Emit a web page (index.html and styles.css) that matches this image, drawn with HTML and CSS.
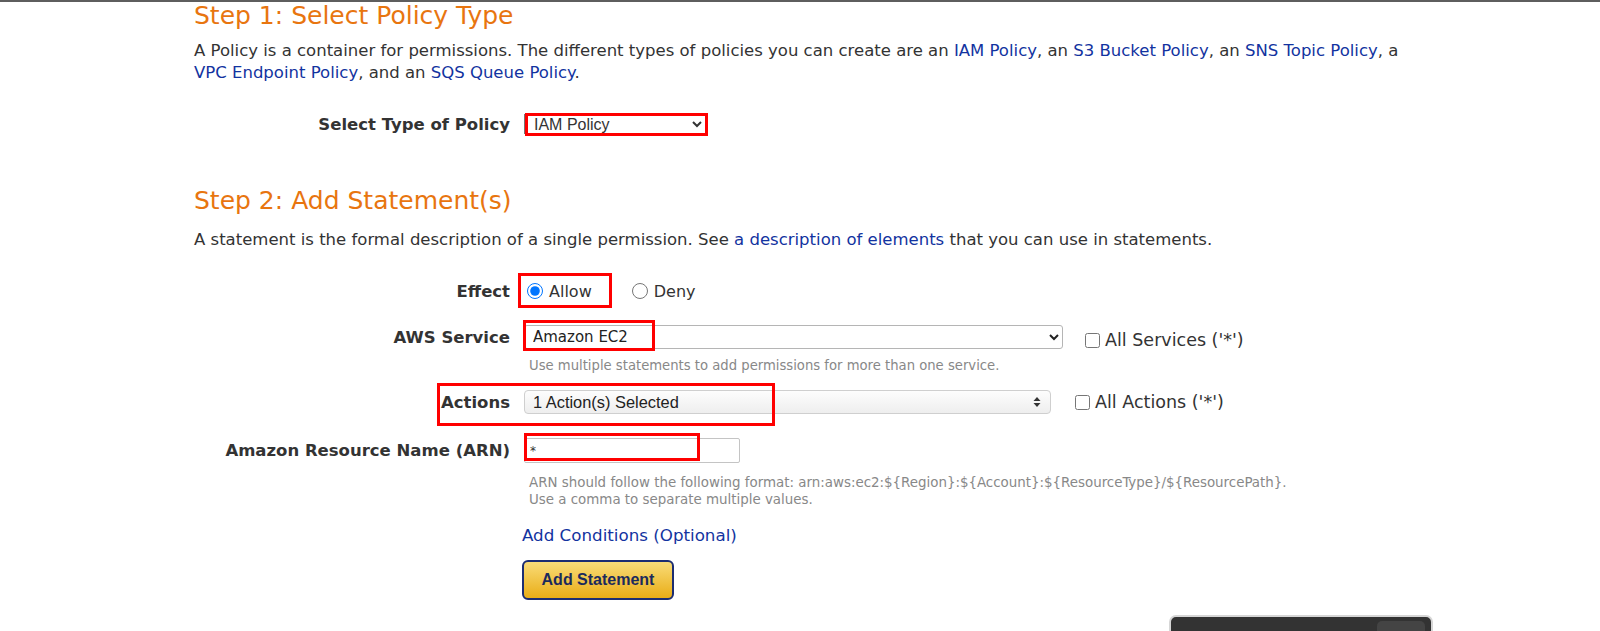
FILE: index.html
```html
<!DOCTYPE html>
<html lang="en">
<head>
    <meta charset="UTF-8">
    <meta name="viewport" content="width=device-width, initial-scale=1.0">
    <title>AWS Policy Generator</title>
    <link rel="stylesheet" href="styles.css">
</head>
<body>
    <div class="topline"></div>

    <div class="page">
        <h2 class="step">Step 1: Select Policy Type</h2>
        <p class="intro">A Policy is a container for permissions. The different types of policies you can create are an <a href="#">IAM Policy</a>, an <a href="#">S3 Bucket Policy</a>, an <a href="#">SNS Topic Policy</a>, a <a href="#">VPC Endpoint Policy</a>, and an <a href="#">SQS Queue Policy</a>.</p>

        <div class="row row-type">
            <label class="field-label" for="policyType">Select Type of Policy</label>
            <div class="field">
                <select id="policyType" class="type-select">
                    <option>IAM Policy</option>
                    <option>S3 Bucket Policy</option>
                    <option>SNS Topic Policy</option>
                </select>
            </div>
        </div>

        <h2 class="step step-two">Step 2: Add Statement(s)</h2>
        <p class="intro intro-two">A statement is the formal description of a single permission. See <a href="#">a description of elements</a> that you can use in statements.</p>

        <div class="row row-effect">
            <span class="field-label">Effect</span>
            <div class="field">
                <label class="choice"><input type="radio" name="effect" checked> Allow</label>
                <label class="choice choice-deny"><input type="radio" name="effect"> Deny</label>
            </div>
        </div>

        <div class="row row-service">
            <label class="field-label" for="service">AWS Service</label>
            <div class="field">
                <select id="service" class="service-select">
                    <option>Amazon EC2</option>
                    <option>Amazon S3</option>
                </select>
                <label class="check check-services"><input type="checkbox"> All Services ('*')</label>
            </div>
        </div>
        <p class="help help-service">Use multiple statements to add permissions for more than one service.</p>

        <div class="row row-actions">
            <span class="field-label">Actions</span>
            <div class="field">
                <button type="button" class="multi-select">
                    <span>1 Action(s) Selected</span>
                    <svg class="updown" width="8" height="12" viewBox="0 0 8 12"><path d="M4 1 L7.5 5 H0.5 Z M4 11 L0.5 7 H7.5 Z" fill="#333"/></svg>
                </button>
                <label class="check check-actions"><input type="checkbox"> All Actions ('*')</label>
            </div>
        </div>

        <div class="row row-arn">
            <label class="field-label" for="arn">Amazon Resource Name (ARN)</label>
            <div class="field">
                <input id="arn" type="text" class="arn-input" value="*">
            </div>
        </div>
        <p class="help help-arn">ARN should follow the following format: arn:aws:ec2:${Region}:${Account}:${ResourceType}/${ResourcePath}.<br>Use a comma to separate multiple values.</p>

        <p class="indent conditions"><a href="#">Add Conditions (Optional)</a></p>
        <div class="indent">
            <button type="button" class="add-btn">Add Statement</button>
        </div>
    </div>

    <!-- red annotation boxes drawn over the form -->
    <span class="mark mark-type"></span>
    <span class="mark mark-allow"></span>
    <span class="mark mark-service"></span>
    <span class="mark mark-actions"></span>
    <span class="mark mark-arn"></span>

    <div class="dock"><span class="dock-btn"></span></div>
</body>
</html>
```

FILE: styles.css
```css
body {
    margin: 0;
    font-family: "DejaVu Sans", Verdana, sans-serif;
    color: #333;
    background: #fff;
    overflow: hidden;
}

a {
    color: #1233a0;
    text-decoration: none;
}

.topline {
    height: 2px;
    background: #5e5e5e;
}

.page {
    padding-left: 194px;
    width: 1222px;
}

.step {
    margin: 0;
    font-size: 25px;
    line-height: 28px;
    font-weight: normal;
    color: #e8750f;
}

.step-two {
    margin-top: 51px;
}

.intro {
    margin: 10px 0 0;
    font-size: 16.5px;
    line-height: 22px;
}

.intro-two {
    margin-top: 14px;
}

.row {
    display: flex;
    align-items: center;
}

.field-label {
    width: 316px;
    margin-right: 14px;
    text-align: right;
    font-size: 16.5px;
    font-weight: bold;
    color: #333;
}

.field {
    display: flex;
    align-items: center;
}

.row-type {
    margin-top: 28px;
    height: 24px;
}

.type-select {
    width: 182px;
    height: 22px;
    padding-left: 5px;
    font-family: "Liberation Sans", Arial, sans-serif;
    font-size: 16px;
    color: #333;
}

.row-effect {
    margin-top: 28px;
    height: 24px;
}

.choice {
    display: flex;
    align-items: center;
    font-size: 16px;
}

.choice input {
    width: 16px;
    height: 16px;
    margin: 0 6px 0 3px;
}

.choice-deny {
    margin-left: 37px;
}

.row-service {
    margin-top: 22px;
    height: 24px;
}

.service-select {
    width: 539px;
    height: 24px;
    padding: 0 4px;
    border: 1px solid #b5b5b5;
    border-radius: 3px;
    background: #fff;
    font-family: "DejaVu Sans", Verdana, sans-serif;
    font-size: 15px;
    color: #222;
}

.check {
    display: flex;
    align-items: center;
    font-size: 17.5px;
    color: #333;
}

.check input {
    width: 15px;
    height: 15px;
    margin: 0 5px 0 0;
}

.check-services {
    margin-left: 22px;
    margin-top: 6px;
}

.help {
    margin: 9px 0 0 335px;
    font-size: 13.2px;
    line-height: 16px;
    color: #888;
}

.row-actions {
    margin-top: 16px;
    height: 24px;
}

.multi-select {
    display: flex;
    align-items: center;
    justify-content: space-between;
    width: 527px;
    height: 24px;
    padding: 0 9px 0 8px;
    border: 1px solid #cfcfcf;
    border-radius: 4px;
    background: linear-gradient(#fdfdfd, #eeeeee);
    font-family: "Liberation Sans", Tahoma, sans-serif;
    font-size: 16.4px;
    color: #222;
}

.check-actions {
    margin-left: 24px;
}

.row-arn {
    margin-top: 24px;
    height: 25px;
}

.arn-input {
    width: 216px;
    height: 25px;
    box-sizing: border-box;
    padding: 0 5px;
    border: 1px solid #c4c4c4;
    border-radius: 2px;
    font-family: "DejaVu Sans", Verdana, sans-serif;
    font-size: 12px;
    color: #333;
}

.help-arn {
    margin-top: 11px;
    line-height: 17px;
    font-family: "DejaVu Sans Condensed", "DejaVu Sans", sans-serif;
    font-size: 14.9px;
}

.indent {
    margin-left: 328px;
}

.conditions {
    margin-top: 16px;
    margin-bottom: 0;
    font-size: 16.7px;
    line-height: 22px;
}

.add-btn {
    margin-top: 14px;
    width: 152px;
    height: 40px;
    border: 2px solid #1c2d72;
    border-radius: 6px;
    background: linear-gradient(#f9dc78, #e9ad17);
    font-family: "Liberation Sans", Arial, sans-serif;
    font-size: 16px;
    font-weight: bold;
    color: #1b2a5c;
    cursor: pointer;
}

.mark {
    position: absolute;
    border: 3px solid #f00;
    box-sizing: border-box;
}

.mark-type {
    left: 525px;
    top: 113px;
    width: 183px;
    height: 23px;
}

.mark-allow {
    left: 518px;
    top: 273px;
    width: 94px;
    height: 35px;
}

.mark-service {
    left: 523px;
    top: 320px;
    width: 132px;
    height: 31px;
}

.mark-actions {
    left: 437px;
    top: 383px;
    width: 338px;
    height: 43px;
}

.mark-arn {
    left: 524px;
    top: 433px;
    width: 176px;
    height: 28px;
}

.dock {
    position: absolute;
    left: 1169px;
    top: 615px;
    width: 264px;
    height: 30px;
    box-sizing: border-box;
    border: 2px solid #d6d6d6;
    border-radius: 7px;
    background: #333;
}

.dock-btn {
    position: absolute;
    right: 6px;
    top: 4px;
    width: 48px;
    height: 20px;
    border-radius: 5px;
    background: #444;
}
```
